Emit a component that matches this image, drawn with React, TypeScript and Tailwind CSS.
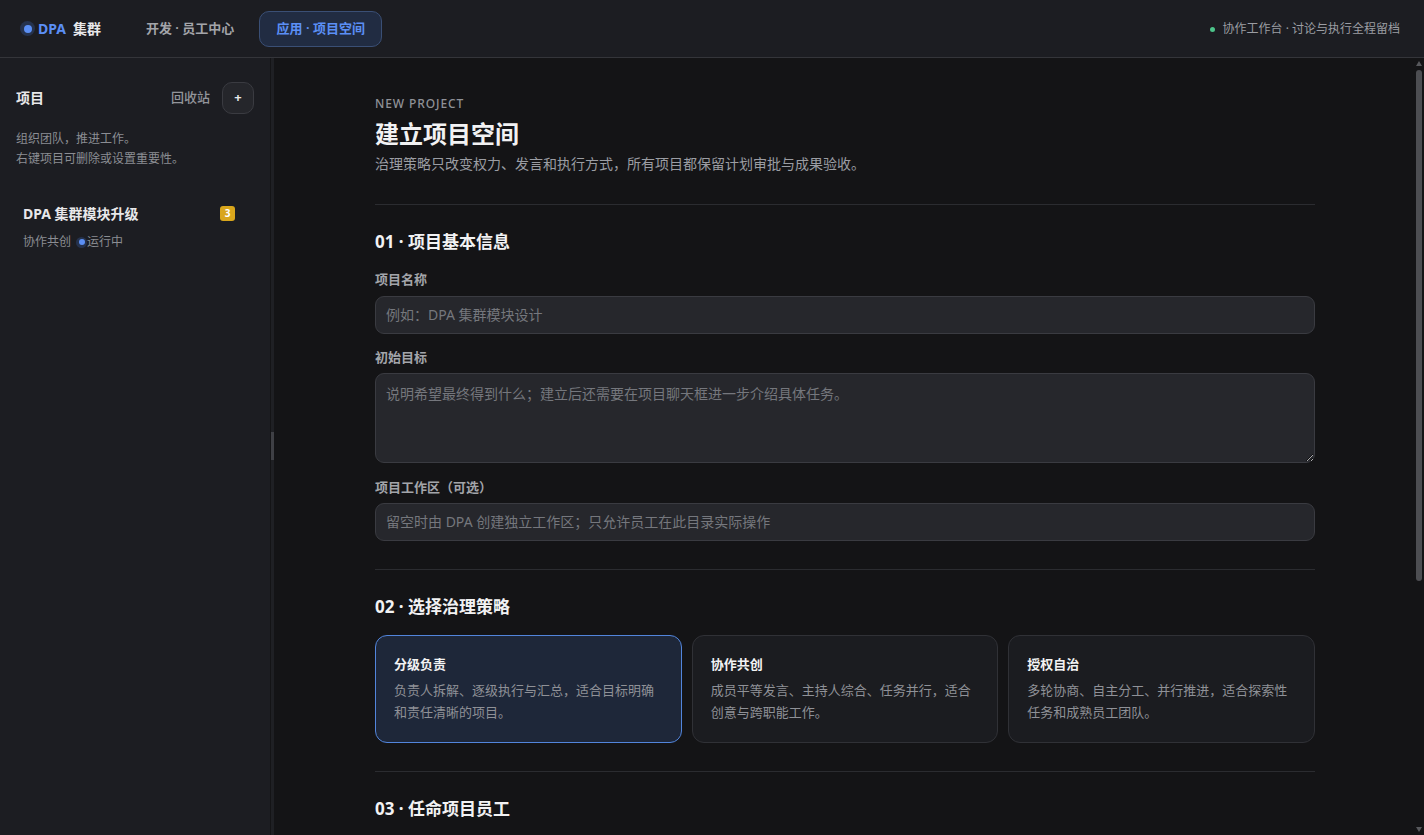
import React from 'react';

const FONT = "font-['Noto_Sans','Noto_Sans_CJK_SC',sans-serif]";

const strategies = [
  { name: '分级负责', desc: '负责人拆解、逐级执行与汇总，适合目标明确和责任清晰的项目。', active: true },
  { name: '协作共创', desc: '成员平等发言、主持人综合、任务并行，适合创意与跨职能工作。', active: false },
  { name: '授权自治', desc: '多轮协商、自主分工、并行推进，适合探索性任务和成熟员工团队。', active: false },
];

const Dot = () => (
  <span className="flex h-[11px] w-[11px] shrink-0 items-center justify-center rounded-full bg-[#25324d]">
    <span className="h-[6px] w-[6px] rounded-full bg-[#5b8ff5]" />
  </span>
);

const Header = () => (
  <header className="flex h-[58px] shrink-0 items-center justify-between border-b border-[#34353a] bg-[#1c1d22] pl-5 pr-6">
    <div className="flex items-center">
      <div className="flex items-center gap-[3px] text-[14px] font-bold">
        <span className="flex h-[15px] w-[15px] items-center justify-center rounded-full bg-[#25324d]">
          <span className="h-[8px] w-[8px] rounded-full bg-[#5b8ff5]" />
        </span>
        <span className="text-[#5b8ff5]">DPA</span>
        <span className="ml-[4px] text-[#e8e8ea]">集群</span>
      </div>
      <a className="ml-[45px] text-[13px] font-semibold text-[#a3a5aa]">开发 · 员工中心</a>
      <a className="ml-[25px] flex h-[36px] w-[123px] items-center justify-center rounded-[10px] border border-[#3a4f75] bg-[#212c42] text-[13px] font-semibold text-[#5b8ff5]">
        应用 · 项目空间
      </a>
    </div>
    <div className="flex items-center gap-2 pt-px text-[12px] text-[#9b9da3]">
      <span className="h-[5px] w-[5px] rounded-full bg-[#4cc38a]" />
      协作工作台 · 讨论与执行全程留档
    </div>
  </header>
);

const Sidebar = () => (
  <aside className="flex w-[274px] shrink-0 bg-[#1c1d22]">
    <div className="flex-1 pl-4 pr-[16px] pt-6">
      <div className="flex items-center justify-between">
        <span className="pb-[2px] text-[14px] font-bold text-[#e8e8ea]">项目</span>
        <div className="flex items-center gap-[12px]">
          <span className="text-[13px] font-medium text-[#93959b]">回收站</span>
          <button className="flex h-[32px] w-[32px] items-center justify-center rounded-[10px] border border-[#3a3b41] bg-[#25262b] text-[13px] font-bold text-[#e8e8ea]">
            +
          </button>
        </div>
      </div>
      <p className="mt-[15px] text-[12px] leading-[20px] text-[#8b8d93]">
        组织团队，推进工作。
        <br />
        右键项目可删除或设置重要性。
      </p>
      <div className="mt-[35px] pl-[7px] pr-[19px]">
        <div className="flex items-center justify-between">
          <span className="text-[14px] font-bold leading-[20px] text-[#e8e8ea]">DPA 集群模块升级</span>
          <span className="mb-[2px] flex h-[15px] w-[15px] items-center justify-center rounded-[3px] bg-[#d9a61c] text-[10px] font-bold text-white">3</span>
        </div>
        <div className="mt-[9px] flex items-center gap-[5px] text-[12px] text-[#8b8d93]">
          协作共创
          <span className="flex items-center">
            <Dot />
            运行中
          </span>
        </div>
      </div>
    </div>
    <div className="flex w-[4px] items-center border-l border-[#141416] bg-[#1f2024]">
      <div className="mt-[-2px] h-[28px] w-[3px] bg-[#3f4045]" />
    </div>
  </aside>
);

const Label = ({ children }: { children: React.ReactNode }) => (
  <label className="mb-[7px] block text-[13px] font-semibold leading-[18px] text-[#a3a5aa]">{children}</label>
);

const fieldClass =
  'block w-full rounded-[9px] border border-[#3a3b41] bg-[#26272c] px-[10px] text-[14px] text-[#e8e8ea] outline-none placeholder:text-[#75777d]';

// headless chrome hides native scrollbars, so the bar is drawn on top
const ScrollBar = () => (
  <div className="absolute bottom-0 right-0 top-0 w-2 bg-[#141416]">
    <div className="absolute left-0 top-[3px] h-0 w-0 border-x-[3px] border-b-[5px] border-x-transparent border-b-[#57585c]" />
    <div className="absolute left-0 top-[12px] h-[511px] w-[6px] rounded-[3px] bg-[#4d4e52]" />
    <div className="absolute bottom-[3px] left-0 h-0 w-0 border-x-[3px] border-t-[5px] border-x-transparent border-t-[#57585c]" />
  </div>
);

const Main = () => (
  <div className="relative min-w-0 flex-1 pr-2">
    <main className="h-full overflow-y-auto bg-[#141416]">
      <div className="mx-auto w-[940px] pt-[38px]">
        <div className="border-b border-[#2b2c30] pb-[30px]">
          <div className="text-[12px] font-medium leading-[16px] tracking-[0.9px] text-[#8f9197]">NEW PROJECT</div>
          <h1 className="mt-[4px] text-[24px] font-bold leading-[36px] text-[#f2f2f3]">建立项目空间</h1>
          <p className="mt-[2px] text-[14px] leading-[20px] text-[#9b9da3]">治理策略只改变权力、发言和执行方式，所有项目都保留计划审批与成果验收。</p>
        </div>

        <section className="border-b border-[#2b2c30] pb-[28px] pt-[25px]">
          <h2 className="mb-[16px] text-[17px] font-bold leading-[24px] text-[#f2f2f3]">01 · 项目基本信息</h2>
          <Label>项目名称</Label>
          <input className={`${fieldClass} mt-[8px] h-[38px] pb-[2px]`} placeholder="例如：DPA 集群模块设计" />
          <div className="mt-[14px]">
            <Label>初始目标</Label>
            <textarea className={`${fieldClass} h-[90px] py-[10px] leading-[20px]`} placeholder="说明希望最终得到什么；建立后还需要在项目聊天框进一步介绍具体任务。" />
          </div>
          <div className="mt-[15px]">
            <Label>项目工作区（可选）</Label>
            <input className={`${fieldClass} h-[38px] pb-[2px]`} placeholder="留空时由 DPA 创建独立工作区；只允许员工在此目录实际操作" />
          </div>
        </section>

        <section className="border-b border-[#2b2c30] pb-[28px] pt-[25px]">
          <h2 className="mb-[16px] text-[17px] font-bold leading-[24px] text-[#f2f2f3]">02 · 选择治理策略</h2>
          <div className="grid grid-cols-3 gap-[10px]">
            {strategies.map((s) => (
              <div
                key={s.name}
                className={`h-[108px] rounded-[12px] border px-[18px] pt-[18px] ${
                  s.active ? 'border-[#5285dc] bg-[#1e2739]' : 'border-[#303136] bg-[#1b1c20]'
                }`}
              >
                <div className="text-[13px] font-bold leading-[20px] text-[#f2f2f3]">{s.name}</div>
                <p className="mt-[5px] text-[13px] leading-[22px] text-[#8f9197]">{s.desc}</p>
              </div>
            ))}
          </div>
        </section>

        <section className="pb-[320px] pt-[25px]">
          <h2 className="text-[17px] font-bold leading-[24px] text-[#f2f2f3]">03 · 任命项目员工</h2>
        </section>
      </div>
    </main>
    <ScrollBar />
  </div>
);

export default function App() {
  return (
    <div className={`flex h-screen flex-col overflow-hidden bg-[#141416] ${FONT}`}>
      <Header />
      <div className="flex min-h-0 flex-1">
        <Sidebar />
        <Main />
      </div>
    </div>
  );
}
